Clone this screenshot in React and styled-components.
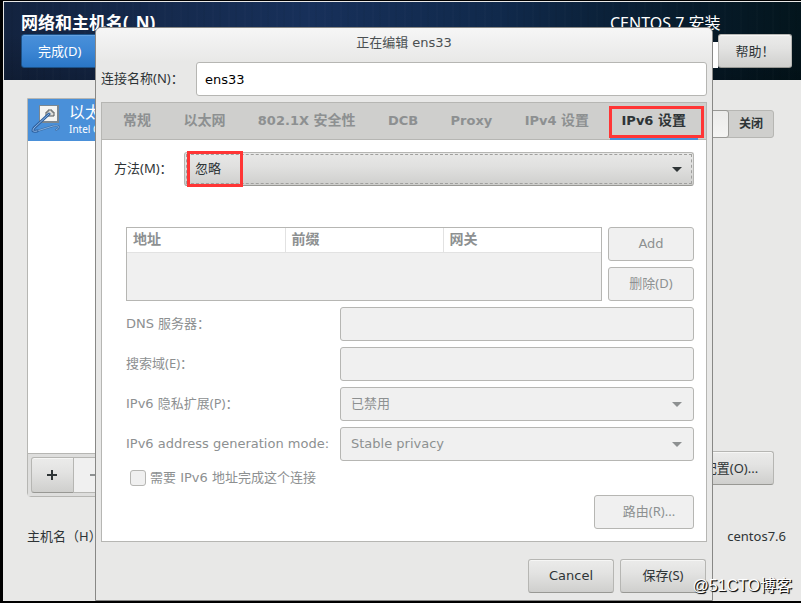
import React, { useState } from "react";
import styled, { createGlobalStyle, css } from "styled-components";

const uiFont = `"DejaVu Sans", "Noto Sans CJK SC", sans-serif`;
const cjkFont = `"Noto Sans", "Noto Sans CJK SC", sans-serif`;

const colors = {
  bg: "#e8e8e7",
  border: "#b6b6b3",
  text: "#2e3436",
  muted: "#8d9091",
  disabled: "#f0f0f0",
  blue: "#4a90d9",
  red: "#ff3535",
};

const GlobalStyle = createGlobalStyle`
  * {
    box-sizing: border-box;
  }
  body {
    margin: 0;
    background: #000;
    color: ${colors.text};
    font: 13px/20px ${uiFont};
  }
  button, input, select {
    font: inherit;
    color: inherit;
    margin: 0;
  }
`;

const Screen = styled.div`
  position: relative;
  display: flex;
  min-height: 100vh;
  padding: 1px 0 2px 3px;
  overflow: hidden;
`;

const Spoke = styled.main`
  flex: 1;
  display: flex;
  flex-direction: column;
  border: solid ${colors.bg};
  border-width: 1px 0 0 1px;
  background: ${colors.bg};
  font-family: ${cjkFont};
`;

const SpokeHeader = styled.header`
  display: flex;
  justify-content: space-between;
  height: 78px;
  padding: 9px 9px 0 17px;
  color: #fff;
  background: repeating-linear-gradient(
      90deg,
      rgba(255, 255, 255, 0.01) 0 2px,
      transparent 2px 7px,
      rgba(0, 0, 0, 0.03) 7px 9px,
      transparent 9px 16px
    ),
    linear-gradient(180deg, transparent 40%, rgba(0, 0, 0, 0.2)),
    linear-gradient(95deg, #13233f 0%, #17305a 38%, #10294b 62%, #071b2b 85%, #03151c 100%);
`;

const HeaderSide = styled.div`
  display: flex;
  flex-direction: column;
  align-items: flex-start;
  width: 182px;
`;

const HeaderTitle = styled.h1`
  margin: 0;
  height: 23px;
  font-size: 17px;
  line-height: 24px;
  font-weight: 700;
  white-space: nowrap;
`;

const ProductTitle = styled.p`
  margin: 0;
  height: 23px;
  font-size: 16px;
  line-height: 24px;
  white-space: nowrap;
`;

const HeaderTools = styled.div`
  display: flex;
  align-items: flex-end;
  align-self: stretch;
`;

const KeyboardLayout = styled.span`
  flex: 1;
  height: 26px;
  background: #fff;
`;

const Button = styled.button`
  min-width: ${(props) => props.$width || 86}px;
  height: 34px;
  padding: 0 12px;
  border: 1px solid ${colors.border};
  border-bottom-color: #989894;
  border-radius: 3px;
  background: linear-gradient(#ebebea, #e3e3e2 40%, #cfcfcd);
  box-shadow: inset 0 1px #f6f6f5;
  color: ${colors.text};
  white-space: nowrap;
  &:disabled {
    border-color: ${colors.border};
    background: ${colors.disabled};
    box-shadow: none;
    color: ${colors.muted};
  }
`;

const DoneButton = styled(Button)`
  padding: 0 16px;
  text-align: left;
  color: #fff;
  border-color: #1c5187;
  background: linear-gradient(#4a90d9, #3c86d4 50%, #2a76c6);
  box-shadow: inset 0 1px #65a1df;
`;

const SpokeBody = styled.div`
  display: flex;
  flex: 1;
  justify-content: space-between;
  padding: 18px 27px 0 23px;
`;

const DeviceColumn = styled.section`
  display: flex;
  flex-direction: column;
  width: 260px;
  height: 399px;
  border: 1px solid ${colors.border};
  border-radius: 0 0 4px 4px;
  background: #fff;
`;

const Device = styled.div`
  display: flex;
  gap: 5px;
  height: 42px;
  padding: 4px 0 0 3px;
  background: ${colors.blue};
  color: #fff;
`;

const DeviceName = styled.div`
  font-size: 16px;
  line-height: 18px;
`;

const DeviceVendor = styled.div`
  font-size: 10px;
  line-height: 17px;
`;

const DeviceTools = styled.div`
  display: flex;
  margin-top: auto;
  padding: 3px;
  border-top: 1px solid ${colors.border};
  background: #dededd;
`;

const ToolButton = styled(Button)`
  height: 36px;
  padding: 0;
  border-radius: 3px 0 0 3px;
  & + & {
    border-left: 0;
    border-radius: 0 3px 3px 0;
  }
  svg {
    display: block;
    margin: 0 auto;
  }
`;

const DeviceDetails = styled.section`
  display: flex;
  flex-direction: column;
  align-items: flex-end;
  justify-content: space-between;
  height: 387px;
  padding-top: 12px;
`;

const Switch = styled.button`
  display: flex;
  width: 90px;
  height: 28px;
  padding: 0;
  border: 1px solid ${colors.border};
  border-radius: 3px;
  background: #cfcfcd;
  font-size: 12px;
  font-weight: 700;
  line-height: 26px;
`;

const SwitchKnob = styled.span`
  flex: 1;
  margin: -1px 0;
  height: 28px;
  border: 1px solid #999996;
  border-radius: 3px;
  background: linear-gradient(#ebebea, #f4f4f3);
`;

const SwitchLabel = styled.span`
  width: 44px;
`;

const HostRow = styled.footer`
  display: flex;
  justify-content: space-between;
  padding: 0 15px 55px 23px;
`;

const Dialog = styled.section`
  position: absolute;
  top: 27px;
  left: 95px;
  right: 88px;
  display: flex;
  flex-direction: column;
  border: 1px solid #888886;
  border-radius: 6px 6px 0 0;
  background: ${colors.bg};
`;

const DialogTitle = styled.h2`
  margin: 0;
  height: 34px;
  padding-top: 5px;
  border-radius: 5px 5px 0 0;
  background: linear-gradient(#f6f6f6, ${colors.bg});
  color: #4a4f51;
  font-size: 13px;
  font-weight: 400;
  text-align: center;
`;

const NameRow = styled.div`
  display: flex;
  align-items: center;
  padding: 0 5px;
  label {
    width: 95px;
  }
`;

const field = css`
  flex: 1;
  min-width: 0;
  height: 34px;
  border: 1px solid ${colors.border};
  border-radius: 3px;
  &:disabled {
    background-color: ${colors.disabled};
    color: ${colors.muted};
    opacity: 1;
  }
`;

const TextInput = styled.input`
  ${field}
  padding: 0 8px;
  background: #fff;
  color: #000;
`;

const Notebook = styled.div`
  margin: 6px 5px 0;
  border: 1px solid ${colors.border};
  background: #fff;
`;

const Tabs = styled.div`
  display: flex;
  justify-content: space-between;
  height: 37px;
  padding: 0 8px 0 9px;
  border-bottom: 1px solid ${colors.border};
  background: #cfcfcd;
`;

const Tab = styled.button`
  position: relative;
  height: 37px;
  padding: 0 12px;
  border: 0;
  border-bottom: 2px solid transparent;
  background: none;
  color: ${colors.muted};
  font-weight: 700;
  white-space: nowrap;
  &[aria-selected="true"] {
    border-bottom-color: ${colors.blue};
    color: ${colors.text};
  }
`;

const Highlight = styled.span`
  position: absolute;
  border: 3px solid ${colors.red};
  pointer-events: none;
`;

const TabHighlight = styled(Highlight)`
  inset: 3px -6px 0 -1px;
`;

const MethodHighlight = styled(Highlight)`
  top: -1px;
  bottom: -1px;
  left: 3px;
  width: 56px;
`;

const Page = styled.div`
  padding: 12px 12px;
`;

const MethodRow = styled.div`
  display: flex;
  align-items: center;
  margin-bottom: 41px;
  label {
    width: 70px;
  }
`;

const SelectBox = styled.div`
  position: relative;
  display: flex;
  flex: 1;
  min-width: 0;
`;

const Select = styled.select`
  ${field}
  appearance: none;
  padding: 0 30px 0 10px;
  background: linear-gradient(#e8e8e7, #e1e1e0 40%, #cfcfcd);
  opacity: 1;
  &:disabled {
    background-image: none;
  }
  &:enabled {
    border-bottom-color: #989894;
    outline: 1px dashed #a0a09e;
    outline-offset: -3px;
  }
`;

const Arrow = styled.svg`
  position: absolute;
  right: 12px;
  top: 15px;
  pointer-events: none;
  fill: ${(props) => (props.$disabled ? colors.muted : colors.text)};
`;

const Settings = styled.div`
  display: flex;
  flex-direction: column;
  gap: 6px;
  padding-left: 12px;
  color: ${colors.muted};
`;

const AddressArea = styled.div`
  display: flex;
  gap: 6px;
`;

const AddressBox = styled.div`
  flex: 1;
  border: 1px solid ${colors.border};
  background: ${colors.disabled};
`;

const AddressTable = styled.table`
  width: 100%;
  border-collapse: collapse;
  table-layout: fixed;
  background: #fff;
  th {
    height: 24px;
    padding: 0 0 2px 6px;
    border-bottom: 1px solid #e2e2e2;
    text-align: left;
    font-size: 14px;
    font-weight: 700;
  }
  th + th {
    border-left: 1px solid #e2e2e2;
  }
`;

const ButtonColumn = styled.div`
  display: flex;
  flex-direction: column;
  gap: 6px;
`;

const SettingRow = styled.div`
  display: flex;
  align-items: center;
  label {
    width: 214px;
    white-space: nowrap;
  }
`;

const CheckRow = styled.label`
  display: flex;
  align-items: center;
  gap: 4px;
  height: 22px;
  padding-left: 4px;
`;

const Checkbox = styled.input`
  appearance: none;
  width: 16px;
  height: 16px;
  border: 1px solid ${colors.border};
  border-radius: 3px;
  background: ${colors.disabled};
`;

const RoutesButton = styled(Button)`
  align-self: flex-end;
  padding-left: 22px;
`;

const Actions = styled.div`
  display: flex;
  justify-content: flex-end;
  gap: 6px;
  padding: 17px 6px 7px;
`;

const Mixed = styled.span`
  font-family: ${cjkFont};
  line-height: 1;
`;

const BoldHan = styled.span`
  font-size: 14px;
  line-height: 1;
`;

const Watermark = styled.div`
  position: absolute;
  right: 9px;
  bottom: 7px;
  color: #fff;
  font: 16px/20px "Liberation Sans", "Noto Sans CJK SC", sans-serif;
  text-shadow: 1px 1px 1px #111, 1px 1px #333;
`;

const tabs = [
  { id: "general", han: "常规" },
  { id: "ethernet", han: "以太网" },
  { id: "security", latin: "802.1X ", han: "安全性" },
  { id: "dcb", latin: "DCB" },
  { id: "proxy", latin: "Proxy" },
  { id: "ipv4", latin: "IPv4 ", han: "设置" },
  { id: "ipv6", latin: "IPv6 ", han: "设置" },
];

function EthernetIcon() {
  return (
    <svg width="33" height="32" viewBox="0 0 33 32" fill="none">
      <rect x="8" y="2" width="20" height="18" fill="#7c8790" />
      <rect x="9" y="3" width="17" height="15" fill="#f4f4f2" />
      <path d="M15 13V9h2V7h4v2h2v4z" fill="#dededa" stroke="#55585a" />
      <path
        d="M6 28l16-5c6-1 8 1 3 4"
        stroke="#3a6ea8"
        strokeWidth="2"
        strokeLinecap="round"
      />
      <path d="M6 28l16-5c6-1 8 1 3 4" stroke="#86aedb" strokeLinecap="round" />
      <path
        d="M18 11 3 25c-2 3-1 4 3 3"
        stroke="#2f619f"
        strokeWidth="3"
        strokeLinecap="round"
      />
      <path d="M18 11 3 25c-2 3-1 4 3 3" stroke="#8fb8e6" strokeLinecap="round" />
    </svg>
  );
}

function Dropdown({ id, options, disabled, children }) {
  return (
    <SelectBox>
      <Select id={id} disabled={disabled}>
        {options.map((option) => (
          <option key={option}>{option}</option>
        ))}
      </Select>
      <Arrow width="10" height="6" viewBox="0 0 10 6" $disabled={disabled}>
        <path d="M0 0h10L5 5z" />
      </Arrow>
      {children}
    </SelectBox>
  );
}

function ConnectionDialog() {
  const [name, setName] = useState("ens33");
  const [activeTab, setActiveTab] = useState("ipv6");

  return (
    <Dialog role="dialog" aria-labelledby="dialog-title">
      <DialogTitle id="dialog-title">正在编辑 ens33</DialogTitle>
      <NameRow>
        <label htmlFor="name">
          <Mixed>连接名称(N)：</Mixed>
        </label>
        <TextInput id="name" value={name} onChange={(e) => setName(e.target.value)} />
      </NameRow>
      <Notebook>
        <Tabs role="tablist">
          {tabs.map((tab) => (
            <Tab
              key={tab.id}
              role="tab"
              aria-selected={tab.id === activeTab}
              onClick={() => setActiveTab(tab.id)}
            >
              {tab.latin}
              {tab.han && <BoldHan>{tab.han}</BoldHan>}
              {tab.id === activeTab && <TabHighlight />}
            </Tab>
          ))}
        </Tabs>
        <Page role="tabpanel">
          <MethodRow>
            <label htmlFor="method">
              <Mixed>方法(M)：</Mixed>
            </label>
            <Dropdown id="method" options={["忽略", "自动", "手动"]}>
              <MethodHighlight />
            </Dropdown>
          </MethodRow>
          <Settings>
            <AddressArea>
              <AddressBox>
                <AddressTable>
                  <thead>
                    <tr>
                      <th>地址</th>
                      <th>前缀</th>
                      <th>网关</th>
                    </tr>
                  </thead>
                </AddressTable>
              </AddressBox>
              <ButtonColumn>
                <Button disabled>Add</Button>
                <Button disabled>
                  <Mixed>删除(D)</Mixed>
                </Button>
              </ButtonColumn>
            </AddressArea>
            <SettingRow>
              <label htmlFor="dns">DNS 服务器：</label>
              <TextInput id="dns" disabled />
            </SettingRow>
            <SettingRow>
              <label htmlFor="search">
                <Mixed>搜索域(E)：</Mixed>
              </label>
              <TextInput id="search" disabled />
            </SettingRow>
            <SettingRow>
              <label htmlFor="privacy">
                IPv6 <Mixed>隐私扩展(P)：</Mixed>
              </label>
              <Dropdown id="privacy" options={["已禁用"]} disabled />
            </SettingRow>
            <SettingRow>
              <label htmlFor="mode">IPv6 address generation mode:</label>
              <Dropdown id="mode" options={["Stable privacy"]} disabled />
            </SettingRow>
            <CheckRow>
              <Checkbox type="checkbox" disabled />
              需要 IPv6 地址完成这个连接
            </CheckRow>
            <RoutesButton $width={100} disabled>
              <Mixed>路由(R)...</Mixed>
            </RoutesButton>
          </Settings>
        </Page>
      </Notebook>
      <Actions>
        <Button>Cancel</Button>
        <Button>
          <Mixed>保存(S)</Mixed>
        </Button>
      </Actions>
    </Dialog>
  );
}

function App() {
  return (
    <Screen>
      <GlobalStyle />
      <Spoke>
        <SpokeHeader>
          <HeaderSide>
            <HeaderTitle>网络和主机名(_N)</HeaderTitle>
            <DoneButton>完成(D)</DoneButton>
          </HeaderSide>
          <HeaderSide>
            <ProductTitle>CENTOS 7 安装</ProductTitle>
            <HeaderTools>
              <KeyboardLayout />
              <Button $width={74}>帮助！</Button>
            </HeaderTools>
          </HeaderSide>
        </SpokeHeader>
        <SpokeBody>
          <DeviceColumn>
            <Device>
              <EthernetIcon />
              <div>
                <DeviceName>以太网</DeviceName>
                <DeviceVendor>Intel C</DeviceVendor>
              </div>
            </Device>
            <DeviceTools>
              <ToolButton $width={43} aria-label="添加">
                <svg width="11" height="11" viewBox="0 0 11 11">
                  <path d="M0 5h10M5 0v10" stroke={colors.text} strokeWidth="2" />
                </svg>
              </ToolButton>
              <ToolButton $width={43} aria-label="删除" disabled>
                <svg width="11" height="11" viewBox="0 0 11 11">
                  <path d="M0 5h10" stroke={colors.muted} strokeWidth="2" />
                </svg>
              </ToolButton>
            </DeviceTools>
          </DeviceColumn>
          <DeviceDetails>
            <Switch role="switch" aria-checked="false">
              <SwitchKnob />
              <SwitchLabel>关闭</SwitchLabel>
            </Switch>
            <Button>配置(O)...</Button>
          </DeviceDetails>
        </SpokeBody>
        <HostRow>
          <span>主机名（H）</span>
          <span>centos7.6</span>
        </HostRow>
      </Spoke>
      <ConnectionDialog />
      <Watermark>@51CTO博客</Watermark>
    </Screen>
  );
}

export default App;
